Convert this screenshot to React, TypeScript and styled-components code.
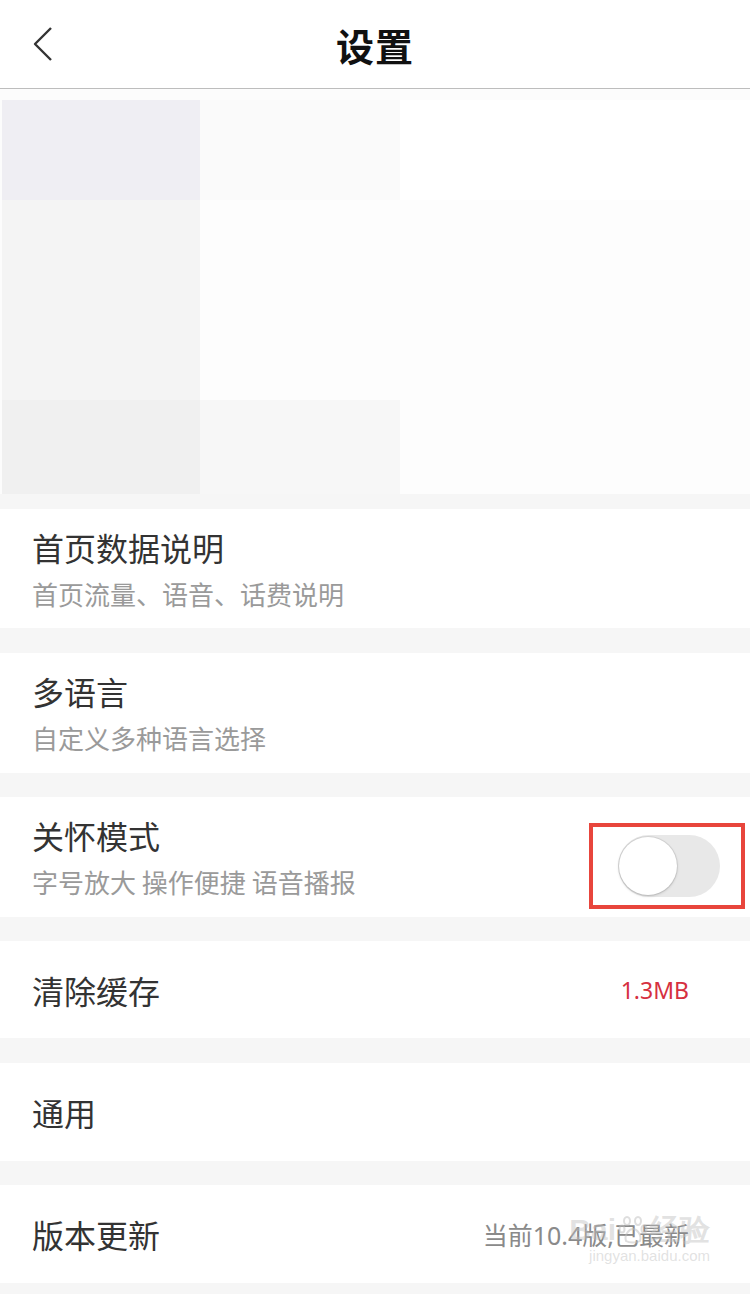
import styled, { createGlobalStyle } from 'styled-components';

const GlobalStyle = createGlobalStyle`
  html, body {
    margin: 0;
    padding: 0;
    background: #f6f6f6;
  }
  body {
    font-family: 'Noto Sans CJK SC', 'Noto Sans', sans-serif;
  }
`;

const Page = styled.div`
  width: 750px;
  height: 1294px;
  overflow: hidden;
  display: flex;
  flex-direction: column;
  background: #f6f6f6;
`;

const Header = styled.header`
  height: 88px;
  flex-shrink: 0;
  background: #fff;
  border-bottom: 1px solid #bdbdbd;
  display: flex;
  align-items: center;
  justify-content: center;
  position: relative;
`;

const BackButton = styled.div`
  position: absolute;
  left: 32px;
  top: 26px;
  width: 22px;
  height: 38px;
`;

const HeaderTitle = styled.h1`
  margin: 0;
  font-size: 38px;
  font-weight: 700;
  color: #111;
  letter-spacing: 1px;
`;

const Blurred = styled.div`
  height: 405px;
  flex-shrink: 0;
  background: #fcfcfc;
  padding-top: 11px;
  padding-left: 2px;
  box-sizing: border-box;
  display: grid;
  grid-template-columns: 198px 200px 1fr;
  grid-template-rows: 100px 200px 94px;
`;

const Cell = styled.div<{ $bg: string }>`
  background: ${(p) => p.$bg};
`;

const Group = styled.div<{ $top: number }>`
  margin-top: ${(p) => p.$top}px;
  flex-shrink: 0;
  background: #fff;
`;

const Row = styled.div<{ $h: number }>`
  height: ${(p) => p.$h}px;
  padding: 0 61px 0 32px;
  display: flex;
  align-items: center;
  justify-content: space-between;
  position: relative;
`;

const TextCol = styled.div`
  display: flex;
  flex-direction: column;
`;

const Title = styled.div`
  font-size: 32px;
  line-height: 40px;
  color: #333;
`;

const Subtitle = styled.div`
  font-size: 26px;
  line-height: 34px;
  margin-top: 10px;
  color: #9a9a9a;
`;

const Value = styled.div<{ $color: string; $size: number }>`
  font-size: ${(p) => p.$size}px;
  color: ${(p) => p.$color};
  font-family: 'Noto Sans', 'Noto Sans CJK SC', sans-serif;
`;

const Highlight = styled.div`
  position: absolute;
  right: 5px;
  top: 26px;
  width: 156px;
  height: 86px;
  box-sizing: border-box;
  border: 4px solid #e8453c;
  padding-left: 4px;
  display: flex;
  align-items: center;
  justify-content: center;
`;

const Switch = styled.div`
  width: 102px;
  height: 62px;
  border-radius: 31px;
  background: #e8e8e8;
  position: relative;
`;

const Knob = styled.div`
  position: absolute;
  left: 1px;
  top: 2px;
  width: 58px;
  height: 58px;
  border-radius: 50%;
  background: #fff;
  box-shadow: 0 1px 3px rgba(0, 0, 0, 0.18), 0 0 0 1px rgba(0, 0, 0, 0.07);
`;

const Watermark = styled.div`
  position: absolute;
  right: 40px;
  top: 28px;
  display: flex;
  flex-direction: column;
  align-items: flex-end;
  color: rgba(190, 190, 190, 0.45);
  font-family: 'Liberation Sans', sans-serif;
  pointer-events: none;
`;

const WatermarkBig = styled.div`
  font-size: 30px;
  font-weight: 700;
  line-height: 34px;
  display: flex;
  align-items: center;
  gap: 2px;
`;

const WatermarkSmall = styled.div`
  font-size: 15px;
  line-height: 18px;
`;

const blocks = ['#efeef3', '#fafafa', '#ffffff', '#f4f4f4', '#fdfdfd', '#fdfdfd', '#f0f0f0', '#f7f7f7', '#fdfdfd'];

function Chevron() {
  return (
    <svg width="22" height="38" viewBox="0 0 22 38">
      <polyline points="19,2 3,18 19,34" fill="none" stroke="#333" strokeWidth="2.4" strokeLinejoin="round" />
    </svg>
  );
}

function Paw() {
  return (
    <svg width="30" height="30" viewBox="0 0 30 30">
      <g fill="none" stroke="rgba(190,190,190,0.5)" strokeWidth="2">
        <ellipse cx="9" cy="6" rx="3" ry="4" />
        <ellipse cx="20" cy="6" rx="3" ry="4" />
        <ellipse cx="4" cy="14" rx="2.5" ry="3.5" />
        <ellipse cx="26" cy="14" rx="2.5" ry="3.5" />
        <path d="M8 26 C6 20 11 14 15 14 C19 14 24 20 22 26 C19 28 11 28 8 26 Z" />
      </g>
    </svg>
  );
}

export default function App() {
  return (
    <Page>
      <GlobalStyle />
      <Header>
        <BackButton>
          <Chevron />
        </BackButton>
        <HeaderTitle>设置</HeaderTitle>
      </Header>

      <Blurred>
        {blocks.map((c, i) => (
          <Cell key={i} $bg={c} />
        ))}
      </Blurred>

      <Group $top={15}>
        <Row $h={119}>
          <TextCol>
            <Title>首页数据说明</Title>
            <Subtitle>首页流量、语音、话费说明</Subtitle>
          </TextCol>
        </Row>
      </Group>

      <Group $top={25}>
        <Row $h={120}>
          <TextCol>
            <Title>多语言</Title>
            <Subtitle>自定义多种语言选择</Subtitle>
          </TextCol>
        </Row>
      </Group>

      <Group $top={24}>
        <Row $h={120}>
          <TextCol>
            <Title>关怀模式</Title>
            <Subtitle>字号放大 操作便捷 语音播报</Subtitle>
          </TextCol>
          <Highlight>
            <Switch>
              <Knob />
            </Switch>
          </Highlight>
        </Row>
      </Group>

      <Group $top={24}>
        <Row $h={97}>
          <Title>清除缓存</Title>
          <Value $color="#d6303f" $size={23}>1.3MB</Value>
        </Row>
      </Group>

      <Group $top={25}>
        <Row $h={98}>
          <Title>通用</Title>
        </Row>
      </Group>

      <Group $top={24}>
        <Row $h={98}>
          <Title>版本更新</Title>
          <Value $color="#8a8a8a" $size={25}>当前10.4版,已最新</Value>
          <Watermark>
            <WatermarkBig>
              Bai
              <Paw />
              经验
            </WatermarkBig>
            <WatermarkSmall>jingyan.baidu.com</WatermarkSmall>
          </Watermark>
        </Row>
      </Group>
    </Page>
  );
}
